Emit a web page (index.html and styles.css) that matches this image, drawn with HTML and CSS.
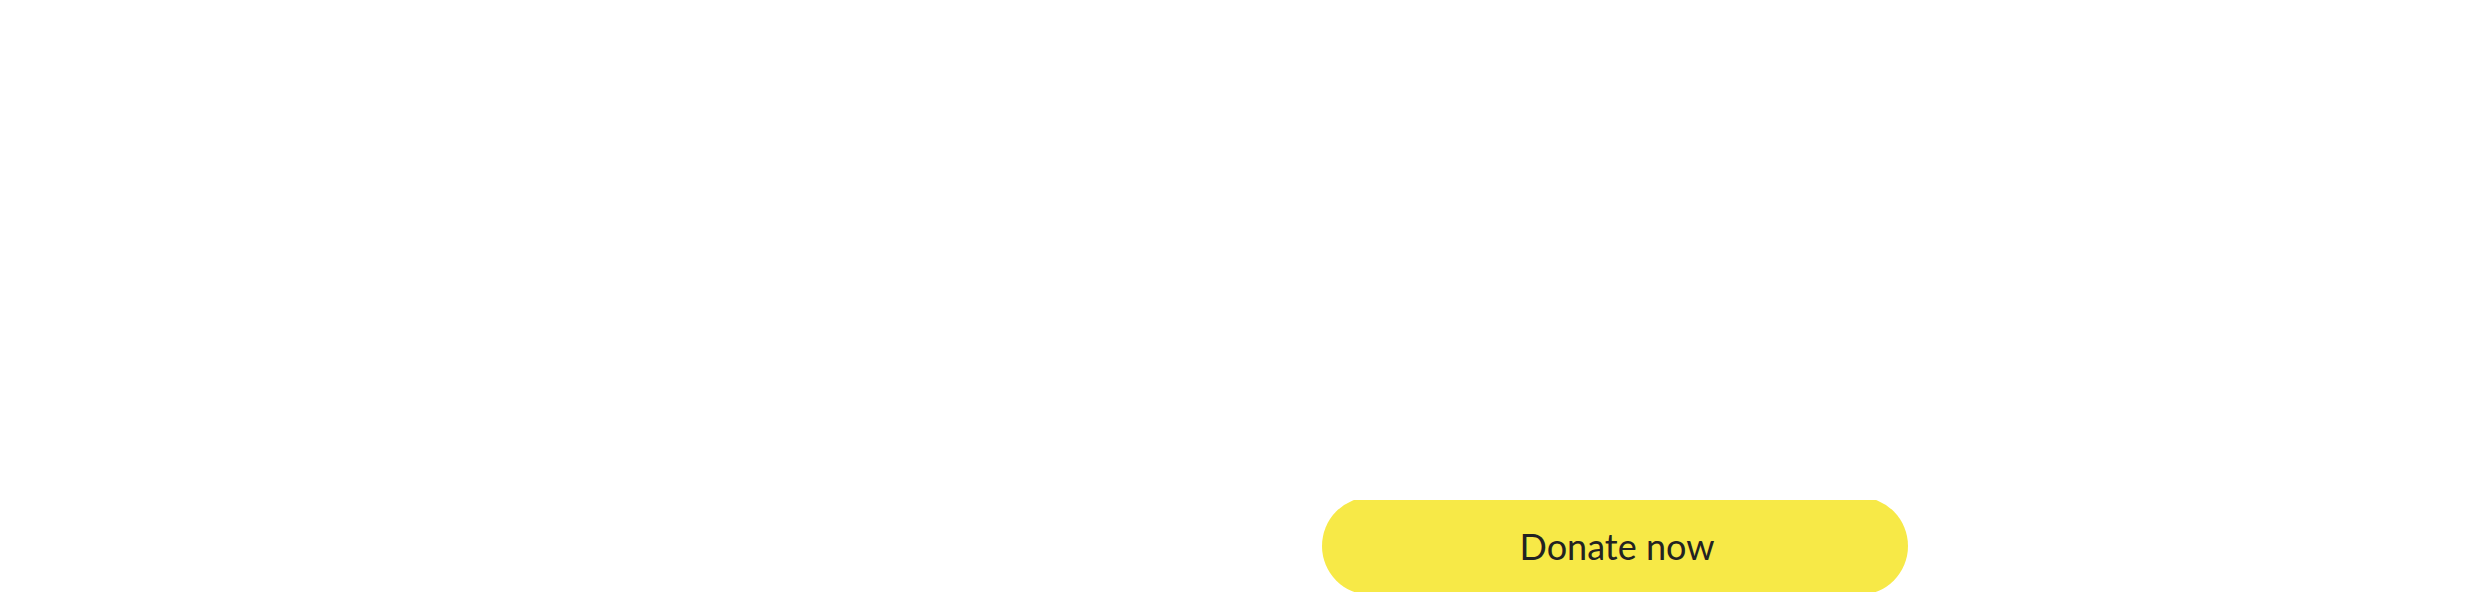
FILE: index.html
```html
<!DOCTYPE html>
<html lang="en">
<head>
<meta charset="utf-8">
<title>Donate</title>
<link rel="stylesheet" href="styles.css">
</head>
<body>
  <main class="page">
    <div class="cta-row">
      <div class="cta-clip">
        <a class="donate-btn" href="#">Donate now</a>
      </div>
    </div>
  </main>
</body>
</html>
```

FILE: styles.css
```css
html, body {
  margin: 0;
  padding: 0;
  background: #ffffff;
}

.page {
  height: 600px;
  display: flex;
  flex-direction: column;
  justify-content: flex-end;
  padding-bottom: 8px;
  box-sizing: border-box;
}

.cta-row {
  display: flex;
  padding-left: 1322px;
}

.cta-clip {
  width: 586px;
  height: 92px;
  overflow: hidden;
  display: flex;
  align-items: center;
}

.donate-btn {
  flex: 0 0 auto;
  width: 586px;
  height: 98px;
  border-radius: 49px;
  background: #f7e947;
  color: #222222;
  font-family: "Lato", "Liberation Sans", sans-serif;
  font-size: 36px;
  text-decoration: none;
  display: flex;
  align-items: center;
  justify-content: center;
  padding-left: 4px;
  box-sizing: border-box;
}
```
